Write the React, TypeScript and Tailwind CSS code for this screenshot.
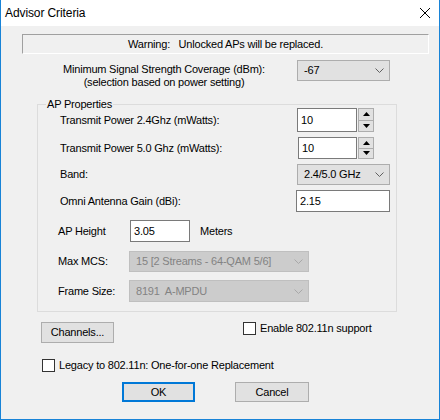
import React from "react";

const Chevron = ({ color = "#606060" }: { color?: string }) => (
  <svg width="9" height="5" viewBox="0 0 9 5">
    <polyline points="0.5,0.5 4.5,4.5 8.5,0.5" fill="none" stroke={color} strokeWidth="1" />
  </svg>
);

const Select = ({ text, w, h, disabled = false }: { text: string; w: string; h: string; disabled?: boolean }) => (
  <div
    className={`${w} ${h} flex items-center justify-between border pl-[6px] pr-[5px] ${
      disabled ? "bg-[#cccccc] border-[#bfbfbf] text-[#838383]" : "bg-[#e1e1e1] border-[#adadad] text-black"
    }`}
  >
    <span className="whitespace-pre">{text}</span>
    <Chevron color={disabled ? "#a8a8a8" : "#606060"} />
  </div>
);

const Arrow = ({ up }: { up: boolean }) => (
  <svg width="7" height="4" viewBox="0 0 7 4">
    {up ? <polygon points="0,4 7,4 3.5,0" fill="#000" /> : <polygon points="0,0 7,0 3.5,4" fill="#000" />}
  </svg>
);

const Spin = ({ value, w, h }: { value: string; w: string; h: string }) => (
  <div className={`flex ${h}`}>
    <div className={`${w} h-full bg-white border border-[#7a7a7a] flex items-center pl-[3px]`}>{value}</div>
    <div className="w-[16px] h-full flex flex-col ml-[1px]">
      <div className="flex-1 bg-[#e1e1e1] border border-[#adadad] flex items-center justify-center">
        <Arrow up />
      </div>
      <div className="flex-1 bg-[#e1e1e1] border border-[#adadad] border-t-0 flex items-center justify-center">
        <Arrow up={false} />
      </div>
    </div>
  </div>
);

const Check = () => <div className="w-[13px] h-[13px] border border-[#333333] bg-white shrink-0" />;

export default function App() {
  return (
    <div className="w-[440px] h-[420px] bg-[#f0f0f0] border-x border-b border-[#1883d7] flex flex-col font-['Liberation_Sans',Arial,sans-serif] text-[11px] tracking-[-0.2px] text-black leading-[13px] whitespace-nowrap">
      <div className="h-[26px] bg-white flex items-center justify-between pl-[4px] pr-[9px] shrink-0">
        <span className="text-[12px] tracking-[-0.1px]">Advisor Criteria</span>
        <svg width="10" height="10" viewBox="0 0 10 10">
          <line x1="0" y1="0" x2="10" y2="10" stroke="#000" strokeWidth="1" />
          <line x1="10" y1="0" x2="0" y2="10" stroke="#000" strokeWidth="1" />
        </svg>
      </div>

      <div className="ml-[21px] mt-[8px] w-[407px] h-[20px] border border-t-[#a0a0a0] border-l-[#a0a0a0] border-r-white border-b-white flex items-center justify-center whitespace-pre">
        {"Warning:   Unlocked APs will be replaced."}
      </div>

      <div className="flex mt-[6px] h-[29px]">
        <div className="ml-[58px] w-[210px] mt-[3px] text-center">
          <div>Minimum Signal Strength Coverage (dBm):</div>
          <div>(selection based on power setting)</div>
        </div>
        <div className="ml-[28px]">
          <Select text="-67" w="w-[93px]" h="h-[21px]" />
        </div>
      </div>

      <div className="relative ml-[36px] mt-[15px] w-[360px] h-[208px] border border-[#dcdcdc] flex flex-col">
        <span className="absolute left-[8px] -top-[7px] bg-[#f0f0f0] px-[1px]">AP Properties</span>

        <div className="flex items-center mt-[3px] h-[24px] pl-[22px]">
          <div className="w-[237px]">Transmit Power 2.4Ghz (mWatts):</div>
          <Spin value="10" w="w-[60px]" h="h-[24px]" />
        </div>
        <div className="flex items-center mt-[5px] h-[22px] pl-[22px]">
          <div className="w-[238px]">Transmit Power 5.0 Ghz (mWatts):</div>
          <Spin value="10" w="w-[59px]" h="h-[22px]" />
        </div>
        <div className="flex items-center mt-[5px] h-[21px] pl-[22px]">
          <div className="w-[237px]">Band:</div>
          <Select text="2.4/5.0 GHz" w="w-[93px]" h="h-[21px]" />
        </div>
        <div className="flex items-center mt-[5px] h-[22px] pl-[22px]">
          <div className="w-[236px]">Omni Antenna Gain (dBi):</div>
          <div className="w-[94px] h-[22px] bg-white border border-[#7a7a7a] flex items-center pl-[3px]">2.15</div>
        </div>
        <div className="flex items-center mt-[8px] h-[22px] pl-[20px]">
          <div className="w-[72px]">AP Height</div>
          <div className="w-[60px] h-[22px] bg-white border border-[#7a7a7a] flex items-center pl-[3px]">3.05</div>
          <div className="ml-[10px]">Meters</div>
        </div>
        <div className="flex items-center mt-[9px] h-[21px] pl-[20px]">
          <div className="w-[71px]">Max MCS:</div>
          <Select text="15 [2 Streams - 64-QAM 5/6]" w="w-[180px]" h="h-[21px]" disabled />
        </div>
        <div className="flex items-center mt-[8px] h-[22px] pl-[20px]">
          <div className="w-[71px]">Frame Size:</div>
          <Select text="8191  A-MPDU" w="w-[180px]" h="h-[22px]" disabled />
        </div>
      </div>

      <div className="flex mt-[10px] h-[21px]">
        <div className="ml-[40px] w-[73px] h-[21px] bg-[#e1e1e1] border border-[#adadad] flex items-center justify-center">
          Channels...
        </div>
        <div className="ml-[129px] flex items-start">
          <Check />
          <span className="ml-[4px] mt-[-1px] leading-[15px]">Enable 802.11n support</span>
        </div>
      </div>

      <div className="flex items-center mt-[16px] h-[13px] ml-[41px]">
        <Check />
        <span className="ml-[4px]">Legacy to 802.11n: One-for-one Replacement</span>
      </div>

      <div className="flex mt-[10px] ml-[121px]">
        <div className="w-[73px] h-[20px] bg-[#e1e1e1] border-2 border-[#0078d7] flex items-center justify-center">OK</div>
        <div className="ml-[40px] w-[74px] h-[20px] bg-[#e1e1e1] border border-[#adadad] flex items-center justify-center">
          Cancel
        </div>
      </div>
    </div>
  );
}
